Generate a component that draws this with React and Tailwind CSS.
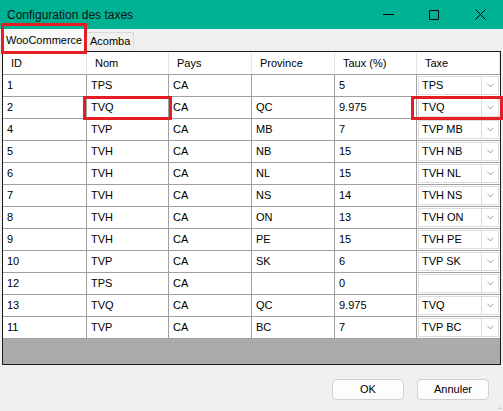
import { ChevronDown } from "lucide-react";

const rows = [
  { id: "1", nom: "TPS", pays: "CA", province: "", taux: "5", taxe: "TPS" },
  { id: "2", nom: "TVQ", pays: "CA", province: "QC", taux: "9.975", taxe: "TVQ" },
  { id: "4", nom: "TVP", pays: "CA", province: "MB", taux: "7", taxe: "TVP MB" },
  { id: "5", nom: "TVH", pays: "CA", province: "NB", taux: "15", taxe: "TVH NB" },
  { id: "6", nom: "TVH", pays: "CA", province: "NL", taux: "15", taxe: "TVH NL" },
  { id: "7", nom: "TVH", pays: "CA", province: "NS", taux: "14", taxe: "TVH NS" },
  { id: "8", nom: "TVH", pays: "CA", province: "ON", taux: "13", taxe: "TVH ON" },
  { id: "9", nom: "TVH", pays: "CA", province: "PE", taux: "15", taxe: "TVH PE" },
  { id: "10", nom: "TVP", pays: "CA", province: "SK", taux: "6", taxe: "TVP SK" },
  { id: "12", nom: "TPS", pays: "CA", province: "", taux: "0", taxe: "" },
  { id: "13", nom: "TVQ", pays: "CA", province: "QC", taux: "9.975", taxe: "TVQ" },
  { id: "11", nom: "TVP", pays: "CA", province: "BC", taux: "7", taxe: "TVP BC" },
];

const headers = ["ID", "Nom", "Pays", "Province", "Taux (%)", "Taxe"];
const cols = "grid grid-cols-[84px_82px_83px_83px_82px_83px]";

function TaxCombo({ value }) {
  return (
    <div className="flex h-full items-center p-px">
      <div className="flex h-full flex-1 items-center border border-[#dcdcdc] bg-white">
        <span className="flex-1 pl-[3px]">{value}</span>
        <span className="flex h-full w-[17px] items-center justify-center border-l border-[#dcdcdc]">
          <ChevronDown size={11} strokeWidth={1.4} className="text-[#606060]" />
        </span>
      </div>
    </div>
  );
}

function App() {
  return (
    <div
      className="relative h-[411px] w-[503px] overflow-hidden bg-[#f0f0f0] text-[11px] text-black"
      style={{ fontFamily: '"Liberation Sans", Arial, sans-serif' }}
    >
      {/* title bar */}
      <div className="flex h-[29px] items-center bg-[#00b294] pl-[7px]">
        <span className="flex-1 text-[12px] text-[#111]">Configuration des taxes</span>
        <div className="flex h-full items-center">
          <span className="flex w-[46px] justify-center">
            <span className="block h-px w-[11px] bg-black" />
          </span>
          <span className="flex w-[46px] justify-center">
            <span className="block h-[10px] w-[10px] rounded-[1px] border border-black" />
          </span>
          <span className="flex w-[46px] justify-center">
            <svg width="11" height="11" viewBox="0 0 11 11">
              <path d="M0.5 0.5 L10.5 10.5 M10.5 0.5 L0.5 10.5" stroke="black" strokeWidth="1" />
            </svg>
          </span>
        </div>
      </div>

      {/* tabs */}
      <div className="flex h-[22px] items-end pl-[3px]">
        <div className="flex h-[22px] w-[83px] items-center bg-[#f9f9f9] pl-[3px]">WooCommerce</div>
        <div className="mb-px flex h-[18px] items-center border border-b-0 border-[#d9d9d9] bg-[#f0f0f0] px-[3px]">
          Acomba
        </div>
      </div>

      {/* grid */}
      <div className="ml-[2px] flex h-[314px] w-[499px] flex-col border border-[#1a1a1a] bg-[#ababab]">
        <div className={`${cols} h-[23px] border-b border-[#a0a0a0] bg-white`}>
          {headers.map((h) => (
            <div key={h} className="flex items-center border-r border-[#e5e5e5] pl-[8px]">
              {h}
            </div>
          ))}
        </div>
        {rows.map((r) => (
          <div key={r.id} className={`${cols} h-[22px] bg-white`}>
            {[r.id, r.nom, r.pays, r.province, r.taux].map((v, i) => (
              <div key={i} className="flex items-center border-r border-b border-[#a0a0a0] pl-[4px]">
                {v}
              </div>
            ))}
            <div className="border-b border-[#a0a0a0]">
              <TaxCombo value={r.taxe} />
            </div>
          </div>
        ))}
      </div>

      {/* buttons */}
      <div className="mt-[14px] flex justify-end gap-[13px] pr-[14px]">
        <button className="h-[21px] w-[72px] rounded-[4px] border border-[#d0d0d0] bg-[#fdfdfd]">OK</button>
        <button className="h-[21px] w-[72px] rounded-[4px] border border-[#d0d0d0] bg-[#fdfdfd]">Annuler</button>
      </div>

      {/* resize grip */}
      <div className="absolute bottom-[2px] right-[2px] grid grid-cols-2 gap-px">
        <span />
        <span className="h-px w-px bg-[#b0b0b0]" />
        <span className="h-px w-px bg-[#b0b0b0]" />
        <span className="h-px w-px bg-[#b0b0b0]" />
      </div>

      {/* red annotation boxes */}
      <div className="absolute left-[1px] top-[23px] h-[31px] w-[86px] border-[3px] border-[#e31e24]" />
      <div className="absolute left-[83px] top-[96px] h-[24px] w-[89px] border-[3px] border-[#e31e24]" />
      <div className="absolute left-[411px] top-[96px] h-[24px] w-[92px] border-[3px] border-[#e31e24]" />
    </div>
  );
}

export default App;
